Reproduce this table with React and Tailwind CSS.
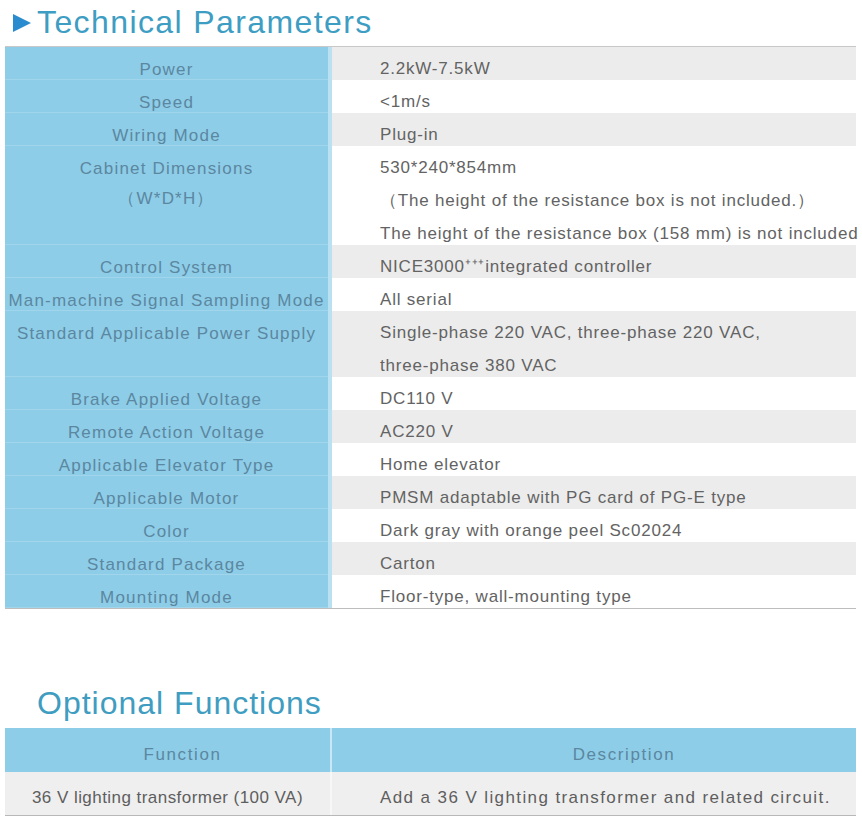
import React from 'react';

const rows = [
  { label: ['Power'], values: ['2.2kW-7.5kW'], gray: true },
  { label: ['Speed'], values: ['<1m/s'], gray: false },
  { label: ['Wiring Mode'], values: ['Plug-in'], gray: true },
  {
    label: ['Cabinet Dimensions', '（W*D*H）'],
    values: [
      '530*240*854mm',
      '（The height of the resistance box is not included.）',
      'The height of the resistance box (158 mm) is not included',
    ],
    gray: false,
  },
  { label: ['Control System'], values: ['NICE3000\u207A\u207A\u207Aintegrated controller'], gray: true },
  { label: ['Man-machine Signal Sampling Mode'], values: ['All serial'], gray: false },
  {
    label: ['Standard Applicable Power Supply'],
    values: ['Single-phase 220 VAC, three-phase 220 VAC,', 'three-phase 380 VAC'],
    gray: true,
  },
  { label: ['Brake Applied Voltage'], values: ['DC110 V'], gray: false },
  { label: ['Remote Action Voltage'], values: ['AC220 V'], gray: true },
  { label: ['Applicable Elevator Type'], values: ['Home elevator'], gray: false },
  { label: ['Applicable Motor'], values: ['PMSM adaptable with PG card of PG-E type'], gray: true },
  { label: ['Color'], values: ['Dark gray with orange peel Sc02024'], gray: false },
  { label: ['Standard Package'], values: ['Carton'], gray: true },
  { label: ['Mounting Mode'], values: ['Floor-type, wall-mounting type'], gray: false },
];

const ParamRow = ({ label, values, gray }) => (
  <div className="flex">
    <div className="w-[323px] shrink-0 bg-[#8ecde8] border-b border-[#a0d5ec] pt-[13px] text-center text-[17px] tracking-[1.2px] text-[#5b87a0] whitespace-nowrap">
      {label.map((l, i) => (
        <div key={i} className={i === 0 ? 'leading-[19px]' : 'mt-[7px] leading-[28px]'}>
          {l}
        </div>
      ))}
    </div>
    <div className="w-[4px] shrink-0 bg-[#b9e1f2]" />
    <div className={`flex-1 ${gray ? 'bg-[#ececec]' : 'bg-white'}`}>
      {values.map((v, i) => (
        <div
          key={i}
          className="h-[33px] pt-[11px] pl-[48px] leading-[22px] text-[17px] tracking-[0.8px] text-[#636363] whitespace-nowrap"
        >
          {v}
        </div>
      ))}
    </div>
  </div>
);

export default function App() {
  return (
    <div className="w-[862px] h-[827px] bg-white font-['Liberation_Sans',Arial,sans-serif] overflow-hidden">
      <div className="flex items-center h-[46px] pl-[12px] pb-[2px]">
        <svg width="20" height="20" viewBox="0 0 20 20" className="mr-[5px] mt-[1px]">
          <polygon points="1,1 19,10 1,19" fill="#2a8ccf" />
        </svg>
        <h1 className="text-[32px] leading-none text-[#3d9dc2] tracking-[1.4px]">Technical Parameters</h1>
      </div>

      <div className="ml-[5px] w-[851px] border-t border-[#c8c8c8] border-b border-b-[#bdbdbd]">
        {rows.map((r, i) => (
          <ParamRow key={i} {...r} />
        ))}
      </div>

      <div className="h-[78px]" />

      <h2 className="pl-[37px] text-[32px] leading-none text-[#3f9dc1] tracking-[1px] h-[41px]">Optional Functions</h2>

      <div className="ml-[5px] w-[851px] border-b border-[#b8b8b8]">
        <div className="flex h-[44px] bg-[#8ecde8] text-[17px] text-[#5b87a0] tracking-[1.6px]">
          <div className="w-[325px] shrink-0 flex items-center justify-center pl-[30px] pt-[10px]">Function</div>
          <div className="w-[2px] shrink-0 bg-[#c9e8f5]" />
          <div className="flex-1 flex items-center justify-center pl-[60px] pt-[10px]">Description</div>
        </div>
        <div className="flex h-[43px] bg-[#efefef] text-[17px] text-[#5e5e5e]">
          <div className="w-[325px] shrink-0 flex items-center justify-center pt-[8px] tracking-[0.45px]">36 V lighting transformer (100 VA)</div>
          <div className="w-[2px] shrink-0 bg-[#f7f7f7]" />
          <div className="flex-1 flex items-center pl-[48px] pt-[8px] tracking-[1.4px] whitespace-nowrap">Add a 36 V lighting transformer and related circuit.</div>
        </div>
      </div>
    </div>
  );
}
